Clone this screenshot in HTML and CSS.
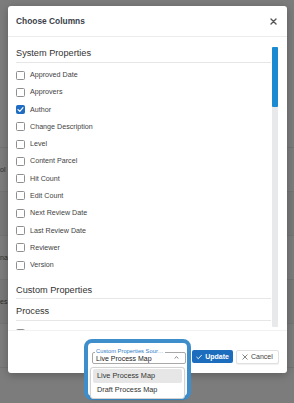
FILE: index.html
```html
<!DOCTYPE html>
<html>
<head>
<meta charset="utf-8">
<link rel="stylesheet" href="styles.css">
</head>
<body>
<div class="page">
  <div class="bg-row tall"></div>
  <div class="bg-row"><span class="bg-text">ol</span></div>
  <div class="bg-row alt"></div>
  <div class="bg-row"><span class="bg-text">nal</span></div>
  <div class="bg-row alt"><span class="bg-text">es</span></div>
  <div class="bg-row"></div>
</div>

<div class="modal">
  <header class="modal-head">
    <h2 class="modal-title">Choose Columns</h2>
    <svg class="close" width="7" height="7" viewBox="0 0 7 7"><path d="M1 1L6 6M6 1L1 6" stroke="#555" stroke-width="1.4" stroke-linecap="round"/></svg>
  </header>
  <div class="modal-body">
    <div class="content">
      <section class="section">
        <h3 class="section-title">System Properties</h3>
        <div class="list">
          <label class="row"><span class="cb"></span>Approved Date</label>
          <label class="row"><span class="cb"></span>Approvers</label>
          <label class="row"><span class="cb checked"><svg width="9" height="9" viewBox="0 0 9 9"><path d="M2 4.6L3.8 6.3L7 2.7" fill="none" stroke="#fff" stroke-width="1.2" stroke-linecap="round" stroke-linejoin="round"/></svg></span>Author</label>
          <label class="row"><span class="cb"></span>Change Description</label>
          <label class="row"><span class="cb"></span>Level</label>
          <label class="row"><span class="cb"></span>Content Parcel</label>
          <label class="row"><span class="cb"></span>Hit Count</label>
          <label class="row"><span class="cb"></span>Edit Count</label>
          <label class="row"><span class="cb"></span>Next Review Date</label>
          <label class="row"><span class="cb"></span>Last Review Date</label>
          <label class="row"><span class="cb"></span>Reviewer</label>
          <label class="row"><span class="cb"></span>Version</label>
        </div>
      </section>
      <section class="section">
        <h3 class="section-title">Custom Properties</h3>
      </section>
      <section class="section">
        <h3 class="section-title">Process</h3>
        <div class="list">
          <label class="row"><span class="cb"></span>Business Function</label>
        </div>
      </section>
    </div>
    <div class="scrollbar"><div class="thumb"></div></div>
  </div>
  <footer class="modal-foot">
    <div class="select-wrap">
      <div class="ring"></div>
      <div class="select">
        <span class="select-label">Custom Properties Sour…</span>
        <span class="select-value">Live Process Map</span>
        <svg class="chev" width="5" height="3" viewBox="0 0 5 3"><path d="M0.6 2.5L2.5 0.7L4.4 2.5" fill="none" stroke="#666" stroke-width="0.8"/></svg>
      </div>
      <ul class="options">
        <li class="option active">Live Process Map</li>
        <li class="option">Draft Process Map</li>
      </ul>
    </div>
    <button class="btn btn-primary"><svg width="7" height="6" viewBox="0 0 7 6"><path d="M0.8 3.2L2.6 4.9L6.2 1" fill="none" stroke="#fff" stroke-width="1" stroke-linecap="round" stroke-linejoin="round"/></svg>Update</button>
    <button class="btn btn-default"><svg width="6" height="6" viewBox="0 0 6 6"><path d="M0.8 0.8L5.2 5.2M5.2 0.8L0.8 5.2" stroke="#666" stroke-width="0.8" stroke-linecap="round"/></svg>Cancel</button>
  </footer>
</div>
</body>
</html>
```

FILE: styles.css
```css
* { box-sizing: border-box; }
html, body { margin: 0; padding: 0; }
body {
  width: 294px;
  height: 403px;
  overflow: hidden;
  background: #7c7c7c;
  font-family: "Liberation Sans", Arial, sans-serif;
  position: relative;
}

.page { display: flex; flex-direction: column; }
.bg-row {
  height: 44px;
  border-bottom: 1px solid #737373;
  display: flex;
  align-items: center;
  font-size: 7px;
  color: #2e2e2e;
}
.bg-row.tall { height: 148px; }
.bg-row.alt { background: #787878; }
.bg-text { white-space: nowrap; }

.modal {
  position: absolute;
  left: 8px;
  top: 6px;
  width: 279px;
  height: 367px;
  background: #fff;
  border-radius: 3px;
  box-shadow: 0 2px 8px rgba(0,0,0,0.25);
  display: flex;
  flex-direction: column;
}

.modal-head {
  height: 31px;
  flex: none;
  display: flex;
  align-items: center;
  justify-content: space-between;
  padding: 0 8px 0 8px;
  border-bottom: 1px solid #ececec;
}
.modal-title {
  margin: 0;
  font-size: 8.4px;
  font-weight: 700;
  color: #3a3f4b;
}
.close { margin-right: 2px; }

.modal-body {
  flex: 1;
  min-height: 0;
  overflow: hidden;
  display: flex;
  border-bottom: 1px solid #f2f2f2;
}
.content {
  flex: 1;
  padding: 9px 0 0 8px;
}
.section { margin-bottom: 5px; }
.section-title {
  margin: 0;
  font-size: 9.2px;
  font-weight: 400;
  line-height: 14px;
  padding-bottom: 1.5px;
  color: #333;
  border-bottom: 1px solid #e6e6e6;
}
.list { padding: 4px 0; }
.row {
  height: 17.27px;
  display: flex;
  align-items: center;
  gap: 5px;
  font-size: 7.15px;
  color: #3f3f3f;
}
.cb {
  width: 9px;
  height: 9px;
  flex: none;
  border: 1px solid #8f8f8f;
  border-radius: 1.5px;
  background: #fff;
  display: flex;
}
.cb.checked {
  background: #1f6cc2;
  border-color: #1f6cc2;
}
.cb.checked svg { margin: -1px; }

.scrollbar {
  flex: none;
  width: 6px;
  height: 280px;
  margin: 10px 9px 0 1px;
  background: #e8e9eb;
  border-radius: 1px;
}
.thumb {
  height: 60px;
  background: #1a8bd0;
  border-radius: 1px;
}

.modal-foot {
  height: 42px;
  flex: none;
  display: flex;
  align-items: center;
  justify-content: flex-end;
  gap: 3px;
  padding: 9px 8px 0;
}
.select-wrap {
  position: relative;
  z-index: 1;
  width: 94px;
  height: 12px;
  margin: 3px 3px 0 0;
}
.ring {
  position: absolute;
  left: -8px;
  top: -13px;
  width: 107px;
  height: 61px;
  border: 4px solid #3d8ecb;
  border-radius: 8px;
  background: #fff;
  z-index: -1;
}
.select {
  height: 12px;
  border: 1px solid #a8a8a8;
  border-radius: 2px;
  display: flex;
  align-items: center;
  padding: 0 6px 0 3px;
  position: relative;
  background: #fff;
}
.select-label {
  position: absolute;
  left: 2px;
  top: -5px;
  font-size: 5.8px;
  line-height: 7px;
  color: #2f7cc4;
  background: #fff;
  padding: 0 1px;
  white-space: nowrap;
}
.select-value {
  flex: 1;
  font-size: 7px;
  color: #222;
  margin-top: 1px;
}
.chev { margin-top: -1px; }
.options {
  position: absolute;
  left: -2px;
  top: 15px;
  width: 95px;
  margin: 0;
  padding: 1px 2px;
  list-style: none;
  background: #fff;
  border: 1px solid #d2d2d2;
  border-radius: 3px;
  box-shadow: 0 1px 3px rgba(0,0,0,0.12);
}
.option {
  height: 14px;
  line-height: 14px;
  padding-left: 4px;
  font-size: 7.3px;
  color: #333;
  border-radius: 2px;
}
.option.active { background: #e6e6e6; }

.btn {
  height: 14px;
  display: flex;
  align-items: center;
  gap: 3px;
  font-family: "Liberation Sans", Arial, sans-serif;
  font-size: 7px;
  border-radius: 2px;
  padding: 0 5px;
  cursor: pointer;
}
.btn-primary {
  width: 41px;
  height: 13px;
  background: #1d6dbf;
  border: none;
  color: #fff;
  font-weight: 700;
  padding: 0 4px;
}
.btn-default {
  width: 43px;
  background: #fff;
  border: 1px solid #e0e0e0;
  color: #444;
  box-shadow: 0 1px 1px rgba(0,0,0,0.06);
}
```
